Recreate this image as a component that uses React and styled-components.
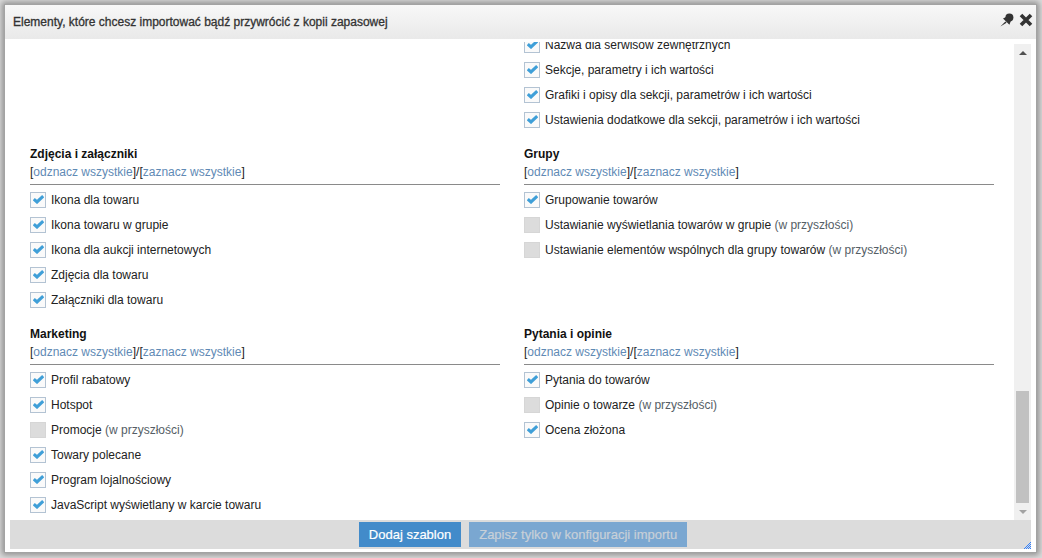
import React from 'react';
import styled, { createGlobalStyle } from 'styled-components';

const GlobalStyle = createGlobalStyle`
  html, body {
    margin: 0;
    height: 100%;
    background: #fff;
    overflow: hidden;
  }
  body {
    font-family: "Liberation Sans", Arial, sans-serif;
    font-size: 12px;
    color: #222;
  }
  * {
    box-sizing: border-box;
  }
`;

// Backdrop gives the soft grey band around the window
const Backdrop = styled.div`
  width: 1042px;
  height: 558px;
  padding: 4px 5px 5px 4px;
  background: #dcdcdc;
  overflow: hidden;
`;

const Window = styled.div`
  height: 549px;
  display: flex;
  flex-direction: column;
  background: #fff;
  border: 1px solid #a3a3a3;
  box-shadow: 0 0 6px 2px #8e8e8e;
`;

const TitleBar = styled.div`
  height: 34px;
  flex: none;
  display: flex;
  align-items: center;
  justify-content: space-between;
  padding: 0 3px 0 8px;
  background: linear-gradient(#f8f8f8, #e9e9e9);
  color: #333;
  font-size: 12px;
  -webkit-text-stroke: 0.3px #333;
`;

const TitleIcons = styled.div`
  display: flex;
  align-items: center;
  gap: 5px;
  margin-top: -4px;
`;

const Body = styled.div`
  flex: 1;
  min-height: 0;
  display: flex;
  flex-direction: column;
  padding: 0 5px 3px 5px;
`;

const ScrollArea = styled.div`
  flex: 1;
  min-height: 0;
  display: flex;
`;

// Top margin keeps the scrolled list clear of the title bar
const Viewport = styled.div`
  flex: 1;
  min-width: 0;
  margin-top: 3px;
  overflow: hidden;
`;

// Negative top margin stands for the scrolled offset of the list
const Content = styled.div`
  margin-top: -27px;
  padding: 0 20px;
  display: grid;
  grid-template-columns: 470px 470px;
  column-gap: 24px;
  align-items: start;
`;

const Section = styled.section`
  padding-top: 15px;
`;

const SectionTitle = styled.h3`
  margin: 0;
  height: 15px;
  line-height: 15px;
  font-size: 12px;
  font-weight: 700;
  color: #111;
`;

const SelectLinks = styled.div`
  height: 23px;
  padding-top: 3px;
  line-height: 15px;
  border-bottom: 1px solid #8a8a8a;
  color: #222;
`;

const SelectLink = styled.a`
  color: #5f8ab5;
  text-decoration: none;
`;

const OptionList = styled.div`
  padding-top: 2px;
`;

const Option = styled.label`
  height: 25px;
  display: flex;
  align-items: center;
  gap: 5px;
  color: #222;
`;

const Box = styled.span`
  width: 16px;
  height: 16px;
  flex: none;
  display: flex;
  align-items: center;
  justify-content: center;
  border: 1px solid ${p => (p.$disabled ? '#d6d6d6' : '#b3c3d3')};
  background: ${p => (p.$disabled ? '#dcdcdc' : '#fafafa')};
`;

const Note = styled.span`
  color: #555e66;
`;

const ScrollBar = styled.div`
  width: 17px;
  flex: none;
  margin-top: 5px;
  display: flex;
  flex-direction: column;
  align-items: center;
  background: #f0f0f0;
`;

const ScrollButton = styled.div`
  height: 17px;
  flex: none;
  display: flex;
  align-items: center;
  justify-content: center;
`;

const ScrollTrack = styled.div`
  flex: 1;
  width: 100%;
  display: flex;
  flex-direction: column;
  justify-content: flex-end;
  align-items: center;
`;

const ScrollThumb = styled.div`
  width: 13px;
  height: 112px;
  background: #c1c1c1;
`;

const Arrow = styled.span`
  width: 0;
  height: 0;
  border-left: 4px solid transparent;
  border-right: 4px solid transparent;
  ${p => (p.$down
    ? 'border-top: 4px solid #a3a3a3;'
    : 'border-bottom: 4px solid #505050;')}
`;

const Footer = styled.div`
  position: relative;
  height: 29px;
  flex: none;
  display: flex;
  align-items: center;
  justify-content: center;
  gap: 8px;
  padding-left: 5px;
  background: #dcdcdc;
`;

const Button = styled.button`
  height: 25px;
  padding: 0 10px;
  border: 0;
  background: ${p => (p.$disabled ? '#7aa7d1' : '#428bca')};
  color: ${p => (p.$disabled ? '#c8d0d8' : '#fff')};
  font-family: "Liberation Sans", Arial, sans-serif;
  font-size: 13px;
  -webkit-text-stroke: 0.2px ${p => (p.$disabled ? '#c8d0d8' : '#fff')};
`;

const ResizeGrip = styled.svg`
  position: absolute;
  right: 0;
  bottom: 0;
`;

const Check = () => (
  <svg width="11" height="9" viewBox="0 0 11 9">
    <path d="M0.8 4.2 L4 7 L10.2 1.2" fill="none" stroke="#3f9fd8" strokeWidth="3.1" />
  </svg>
);

const gripDots = [];
for (let y = 0; y < 7; y++) {
  for (let x = 0; x < 7; x++) {
    if (x + y >= 6 && (x + y) % 2 === 0) gripDots.push([x, y]);
  }
}

const sections = [
  {
    spacer: true,
  },
  {
    options: [
      { label: 'Nazwa dla serwisów zewnętrznych', on: true },
      { label: 'Sekcje, parametry i ich wartości', on: true },
      { label: 'Grafiki i opisy dla sekcji, parametrów i ich wartości', on: true },
      { label: 'Ustawienia dodatkowe dla sekcji, parametrów i ich wartości', on: true },
    ],
  },
  {
    title: 'Zdjęcia i załączniki',
    options: [
      { label: 'Ikona dla towaru', on: true },
      { label: 'Ikona towaru w grupie', on: true },
      { label: 'Ikona dla aukcji internetowych', on: true },
      { label: 'Zdjęcia dla towaru', on: true },
      { label: 'Załączniki dla towaru', on: true },
    ],
  },
  {
    title: 'Grupy',
    options: [
      { label: 'Grupowanie towarów', on: true },
      { label: 'Ustawianie wyświetlania towarów w grupie', note: '(w przyszłości)' },
      { label: 'Ustawianie elementów wspólnych dla grupy towarów', note: '(w przyszłości)' },
    ],
  },
  {
    title: 'Marketing',
    options: [
      { label: 'Profil rabatowy', on: true },
      { label: 'Hotspot', on: true },
      { label: 'Promocje', note: '(w przyszłości)' },
      { label: 'Towary polecane', on: true },
      { label: 'Program lojalnościowy', on: true },
      { label: 'JavaScript wyświetlany w karcie towaru', on: true },
    ],
  },
  {
    title: 'Pytania i opinie',
    options: [
      { label: 'Pytania do towarów', on: true },
      { label: 'Opinie o towarze', note: '(w przyszłości)' },
      { label: 'Ocena złożona', on: true },
    ],
  },
];

const SectionBlock = ({ section }) => (
  <Section>
    {section.title && <SectionTitle>{section.title}</SectionTitle>}
    {section.title && (
      <SelectLinks>
        [<SelectLink href="#">odznacz wszystkie</SelectLink>]/[<SelectLink href="#">zaznacz wszystkie</SelectLink>]
      </SelectLinks>
    )}
    {section.options && (
      <OptionList>
        {section.options.map(opt => (
          <Option key={opt.label}>
            <Box $disabled={!opt.on}>{opt.on && <Check />}</Box>
            <span>
              {opt.label}
              {opt.note && <Note> {opt.note}</Note>}
            </span>
          </Option>
        ))}
      </OptionList>
    )}
  </Section>
);

export default function App() {
  return (
    <Backdrop>
      <GlobalStyle />
      <Window>
        <TitleBar>
          Elementy, które chcesz importować bądź przywrócić z kopii zapasowej
          <TitleIcons>
            <svg width="14" height="14" viewBox="0 0 14 14">
              <circle cx="9.4" cy="4.4" r="4" fill="#333" />
              <path d="M3 5.4 L9.4 11.8 L11.4 6.4 L8 3 Z M5.4 8.6 L0.4 13.6 L6.6 9.8 Z" fill="#333" />
            </svg>
            <svg width="14" height="14" viewBox="0 0 14 14">
              <path d="M2 2 L12 12 M12 2 L2 12" stroke="#333" strokeWidth="3.6" />
            </svg>
          </TitleIcons>
        </TitleBar>
        <Body>
          <ScrollArea>
            <Viewport>
              <Content>
                {sections.map((section, i) => (
                  <SectionBlock key={i} section={section} />
                ))}
              </Content>
            </Viewport>
            <ScrollBar>
              <ScrollButton><Arrow /></ScrollButton>
              <ScrollTrack><ScrollThumb /></ScrollTrack>
              <ScrollButton><Arrow $down /></ScrollButton>
            </ScrollBar>
          </ScrollArea>
          <Footer>
            <Button>Dodaj szablon</Button>
            <Button $disabled disabled>Zapisz tylko w konfiguracji importu</Button>
            <ResizeGrip width="7" height="7" viewBox="0 0 7 7">
              {gripDots.map(([x, y]) => (
                <rect key={`${x}-${y}`} x={x} y={y} width="1" height="1" fill="#2f7fff" />
              ))}
            </ResizeGrip>
          </Footer>
        </Body>
      </Window>
    </Backdrop>
  );
}
